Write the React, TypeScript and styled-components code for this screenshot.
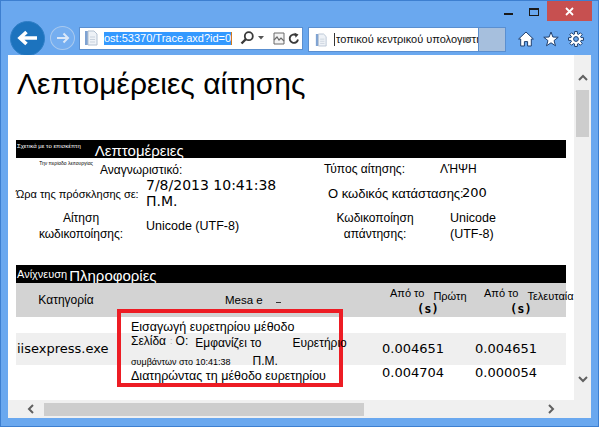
import React from 'react';
import styled, { createGlobalStyle } from 'styled-components';

const GlobalStyle = createGlobalStyle`
  html, body { margin: 0; padding: 0; background: #fff; }
  body {
    font-family: "Liberation Sans", Arial, sans-serif;
    overflow: hidden;
  }
`;

const Frame = styled.div`
  width: 599px;
  height: 427px;
  box-sizing: border-box;
  border: 1px solid #3d7fd0;
  background: #6aa8ef;
  display: flex;
  flex-direction: column;
`;

/* ---------- title bar ---------- */

const TitleBar = styled.div`
  height: 20px;
  flex: none;
  display: flex;
  justify-content: flex-end;
  padding-right: 6px;
`;

const CtrlSlot = styled.div<{ $pt: number }>`
  width: 26px;
  display: flex;
  justify-content: center;
  align-items: flex-start;
  padding-top: ${({ $pt }) => $pt}px;
  box-sizing: border-box;
`;

const MinGlyph = styled.div`
  width: 9px;
  height: 2px;
  background: #1a1a1a;
`;

const MaxGlyph = styled.div`
  width: 10px;
  height: 8px;
  box-sizing: border-box;
  border: 1px solid #1a1a1a;
  border-top-width: 2px;
`;

const CloseBtn = styled.div`
  width: 45px;
  background: #c75050;
  display: flex;
  align-items: center;
  justify-content: center;
`;

/* ---------- navigation toolbar ---------- */

const Toolbar = styled.div`
  height: 34px;
  flex: none;
  display: flex;
  align-items: center;
  padding-left: 9px;
`;

const BackButton = styled.div`
  width: 35px;
  height: 35px;
  flex: none;
  box-sizing: border-box;
  border-radius: 50%;
  background: #1c73be;
  border: 1px solid #2f7fc7;
  display: flex;
  align-items: center;
  justify-content: center;
`;

const ForwardButton = styled.div`
  width: 25px;
  height: 24px;
  flex: none;
  margin-left: 5px;
  box-sizing: border-box;
  border-radius: 50%;
  border: 1.5px solid #a9c9ee;
  background: #75aef0;
  display: flex;
  align-items: center;
  justify-content: center;
`;

const AddressBar = styled.div`
  width: 224px;
  height: 23px;
  flex: none;
  margin-left: 4px;
  box-sizing: border-box;
  background: #fff;
  border: 1px solid #5a8fd0;
  display: flex;
  align-items: center;
  padding-left: 4px;
`;

const UrlSelection = styled.div`
  width: 128px;
  height: 13px;
  margin-left: 6px;
  flex: none;
  overflow: hidden;
  background: #3399ff;
  color: #fff;
  font-size: 11px;
  line-height: 13px;
  white-space: nowrap;
  border-right: 1px solid #d07a1e;
  box-sizing: border-box;
`;

const BarIcon = styled.span<{ $ml: number }>`
  display: flex;
  flex: none;
  margin-left: ${({ $ml }) => $ml}px;
`;

const Tab = styled.div`
  position: relative;
  width: 171px;
  height: 25px;
  flex: none;
  align-self: flex-end;
  margin: 0 0 3px 5px;
  box-sizing: border-box;
  background: #fff;
  border: 1px solid #5a8fd0;
  display: flex;
  align-items: center;
  padding-left: 6px;
`;

const TabTitle = styled.span`
  margin-left: 7px;
  padding-left: 1px;
  border-left: 1px solid #333;
  font-size: 11px;
  line-height: 13px;
  color: #111;
  white-space: nowrap;
  overflow: hidden;
  flex: 1;
`;

const TabClose = styled.span`
  position: absolute;
  right: 7px;
  top: 5px;
  font-size: 13px;
  line-height: 13px;
  color: #7a7a7a;
`;

const NewTab = styled.div`
  width: 27px;
  height: 25px;
  flex: none;
  align-self: flex-end;
  margin-bottom: 3px;
  box-sizing: border-box;
  background: #a6bfdd;
  border: 1px solid #5a8fd0;
  border-left: none;
`;

const ToolIcons = styled.div`
  display: flex;
  gap: 9px;
  margin-left: 12px;
  margin-top: 1px;
`;

/* ---------- viewport ---------- */

const Viewport = styled.div`
  flex: 1;
  margin: 0 7px 8px 7px;
  display: grid;
  grid-template-columns: 1fr 17px;
  grid-template-rows: 1fr 18px;
  background: #fff;
  overflow: hidden;
`;

const Page = styled.div`
  position: relative;
  overflow: hidden;
  padding: 0 0 0 8px;
  color: #000;
`;

const PageTitle = styled.h1`
  margin: 11px 0 0 0;
  padding-left: 1px;
  font-size: 30px;
  line-height: 36px;
  font-weight: normal;
  white-space: nowrap;
`;

const SectionBar = styled.div<{ $mt: number }>`
  width: 550px;
  height: 18px;
  margin-top: ${({ $mt }) => $mt}px;
  background: #000;
  color: #fff;
  display: flex;
  align-items: flex-end;
  white-space: nowrap;
`;

const BarSmall = styled.span<{ $size: number; $mt: number }>`
  align-self: flex-start;
  margin-top: ${({ $mt }) => $mt}px;
  padding-left: 1px;
  font-size: ${({ $size }) => $size}px;
  line-height: ${({ $size }) => $size + 1}px;
`;

const BarLarge = styled.span<{ $ml: number }>`
  margin-left: ${({ $ml }) => $ml}px;
  font-size: 15px;
  line-height: 14px;
`;

const DetailRow = styled.div<{ $h: number; $top?: boolean }>`
  height: ${({ $h }) => $h}px;
  display: flex;
  align-items: ${({ $top }) => ($top ? 'flex-start' : 'center')};
`;

const Cell = styled.div<{
  $w?: number;
  $align?: 'left' | 'center' | 'right';
  $mt?: number;
  $ml?: number;
  $mb?: number;
  $mono?: boolean;
  $size?: number;
}>`
  flex: none;
  width: ${({ $w }) => ($w ? `${$w}px` : 'auto')};
  margin: ${({ $mt = 0 }) => $mt}px 0 ${({ $mb = 0 }) => $mb}px ${({ $ml = 0 }) => $ml}px;
  text-align: ${({ $align = 'left' }) => $align};
  font-family: ${({ $mono }) =>
    $mono ? '"DejaVu Sans", Verdana, sans-serif' : '"Liberation Sans", Arial, sans-serif'};
  font-size: ${({ $size = 12 }) => $size}px;
  line-height: 16px;
  white-space: nowrap;
`;

const TinyNote = styled.div`
  width: 84px;
  flex: none;
  margin-top: 2px;
  padding-right: 7px;
  box-sizing: border-box;
  text-align: right;
  font-size: 5px;
  line-height: 6px;
  white-space: nowrap;
`;

/* ---------- trace table ---------- */

const TraceWrap = styled.div`
  position: relative;
  width: 550px;
`;

const TraceGrid = styled.div<{ $h: number; $bg: string; $top?: boolean }>`
  display: grid;
  grid-template-columns: 100px 252px 107px 91px;
  height: ${({ $h }) => $h}px;
  background: ${({ $bg }) => $bg};
  align-items: ${({ $top }) => ($top ? 'start' : 'center')};
`;

const HeadCell = styled.div<{ $pl?: number; $center?: boolean; $size: number }>`
  display: flex;
  justify-content: ${({ $center }) => ($center ? 'center' : 'flex-start')};
  padding-left: ${({ $pl = 0 }) => $pl}px;
  font-size: ${({ $size }) => $size}px;
  line-height: 16px;
  white-space: nowrap;
`;

const HeadStack = styled.div<{ $pl: number }>`
  align-self: start;
  padding: 3px 0 0 ${({ $pl }) => $pl}px;
  display: flex;
  flex-direction: column;
  white-space: nowrap;
`;

const HeadLine = styled.div`
  display: flex;
  align-items: flex-start;
  font-size: 11px;
  line-height: 14px;
`;

const HeadWord = styled.span`
  margin: 3px 0 0 9px;
  font-size: 11px;
`;

const HeadUnit = styled.span<{ $ml: number }>`
  margin: -1px 0 0 ${({ $ml }) => $ml}px;
  font-family: "DejaVu Sans Mono", "Liberation Mono", monospace;
  font-weight: bold;
  font-size: 12px;
  line-height: 14px;
`;

const DashMark = styled.span`
  width: 5px;
  height: 1px;
  margin: 10px 0 0 13px;
  background: #333;
`;

const DataCell = styled.div<{ $pl?: number }>`
  padding-left: ${({ $pl = 0 }) => $pl}px;
  font-family: "DejaVu Sans", Verdana, sans-serif;
  font-size: 13px;
  line-height: 16px;
  white-space: nowrap;
`;

const RedBox = styled.div`
  position: absolute;
  left: 101px;
  top: 26px;
  width: 226px;
  height: 78px;
  box-sizing: border-box;
  border: 4px solid #ed1c24;
  padding: 6px 0 0 10px;
  white-space: nowrap;
`;

const BoxLine = styled.div<{ $h: number }>`
  height: ${({ $h }) => $h}px;
  display: flex;
  align-items: flex-end;
  font-size: 12.5px;
  line-height: 16px;
`;

const BoxText = styled.span<{ $size: number; $ml?: number; $mb?: number; $muted?: boolean }>`
  font-size: ${({ $size }) => $size}px;
  line-height: ${({ $size }) => ($size < 10 ? 12 : 14)}px;
  margin: 0 0 ${({ $mb = 0 }) => $mb}px ${({ $ml = 0 }) => $ml}px;
  color: ${({ $muted }) => ($muted ? '#b0b0b0' : '#000')};
`;

/* ---------- scrollbars ---------- */

const VScroll = styled.div`
  background: #f0f0f0;
  display: flex;
  flex-direction: column;
  align-items: center;
  padding: 18px 0 16px;
  box-sizing: border-box;
`;

const VThumb = styled.div`
  width: 13px;
  height: 47px;
  margin-top: 7px;
  background: #cdcdcd;
`;

const HScroll = styled.div`
  background: #f0f0f0;
  display: flex;
  align-items: center;
  padding: 0 18px;
`;

const HThumb = styled.div`
  width: 320px;
  height: 13px;
  margin-left: 8px;
  background: #cdcdcd;
`;

const Corner = styled.div`
  background: #f0f0f0;
`;

const Spacer = styled.div`
  flex: 1;
`;

/* ---------- drawings ---------- */

const NAVY = '#1e3f6e';

const Chevron = ({ dir }: { dir: 'up' | 'down' | 'left' | 'right' }) => {
  const rot = { up: 0, right: 90, down: 180, left: 270 }[dir];
  return (
    <svg width="10" height="10" viewBox="0 0 10 10" style={{ transform: `rotate(${rot}deg)` }}>
      <polyline points="1,7 5,3 9,7" fill="none" stroke="#606060" strokeWidth="2" />
    </svg>
  );
};

const PageIcon = ({ w, h }: { w: number; h: number }) => (
  <svg width={w} height={h} viewBox="0 0 14 16">
    <rect x="1" y="1" width="3" height="14" fill="#7fa3d3" />
    <path d="M4 1 H10 L13 4 V15 H4 Z" fill="#eef2f7" stroke="#b4c1d1" />
    <path d="M6 7 H11 M6 9.5 H11 M6 12 H11" stroke="#c9d2dd" />
  </svg>
);

const starPoints = () => {
  const pts: string[] = [];
  for (let i = 0; i < 10; i++) {
    const r = i % 2 === 0 ? 7.6 : 3.2;
    const a = (Math.PI / 5) * i - Math.PI / 2;
    pts.push(`${(8 + r * Math.cos(a)).toFixed(2)},${(8.6 + r * Math.sin(a)).toFixed(2)}`);
  }
  return pts.join(' ');
};

const gearPoints = () => {
  const pts: string[] = [];
  for (let k = 0; k < 8; k++) {
    const a = (Math.PI / 4) * k;
    const d = (deg: number) => (deg * Math.PI) / 180;
    [
      [-16, 5.2],
      [-10, 7.6],
      [10, 7.6],
      [16, 5.2],
    ].forEach(([off, r]) => {
      const t = a + d(off);
      pts.push(`${(8 + r * Math.cos(t)).toFixed(2)},${(8 + r * Math.sin(t)).toFixed(2)}`);
    });
  }
  return pts.join(' ');
};

export default function App() {
  return (
    <>
      <GlobalStyle />
      <Frame>
        <TitleBar>
          <CtrlSlot $pt={12}>
            <MinGlyph />
          </CtrlSlot>
          <CtrlSlot $pt={7}>
            <MaxGlyph />
          </CtrlSlot>
          <CloseBtn>
            <svg width="9" height="9" viewBox="0 0 9 9">
              <path d="M1 1 L8 8 M8 1 L1 8" stroke="#fff" strokeWidth="1.8" />
            </svg>
          </CloseBtn>
        </TitleBar>

        <Toolbar>
          <BackButton>
            <svg width="22" height="16" viewBox="0 0 22 16">
              <path d="M20 8 H3.5 M9.5 2 L3 8 L9.5 14" fill="none" stroke="#fff" strokeWidth="3.6" />
            </svg>
          </BackButton>
          <ForwardButton>
            <svg width="14" height="12" viewBox="0 0 14 12">
              <path d="M1 6 H12 M7.5 1.5 L12 6 L7.5 10.5" fill="none" stroke="#dbe8f8" strokeWidth="2" />
            </svg>
          </ForwardButton>
          <AddressBar>
            <PageIcon w={14} h={16} />
            <UrlSelection>ost:53370/Trace.axd?id=0</UrlSelection>
            <BarIcon $ml={8}>
              <svg width="14" height="14" viewBox="0 0 14 14">
                <circle cx="8.8" cy="5.2" r="4" fill="none" stroke="#3a3a3a" strokeWidth="1.8" />
                <path d="M6 8 L1.5 12.5" stroke="#3a3a3a" strokeWidth="2.4" />
              </svg>
            </BarIcon>
            <BarIcon $ml={4}>
              <svg width="6" height="4" viewBox="0 0 6 4">
                <path d="M0 0 H6 L3 3.5 Z" fill="#555" />
              </svg>
            </BarIcon>
            <BarIcon $ml={9}>
              <svg width="12" height="13" viewBox="0 0 12 13">
                <path d="M1 1 H11 V12 H1 Z" fill="#f4f4f4" stroke="#6a6a6a" />
                <path d="M1 8 L4 5 L6 8 L8 6 L11 9" fill="none" stroke="#6a6a6a" strokeWidth="1.2" />
              </svg>
            </BarIcon>
            <BarIcon $ml={3}>
              <svg width="12" height="13" viewBox="0 0 12 13">
                <path d="M10 7.5 A4.2 4.2 0 1 1 8.3 3.2" fill="none" stroke="#3a3a3a" strokeWidth="1.9" />
                <path d="M6.5 0.8 L10.5 2.6 L7.6 5.8 Z" fill="#3a3a3a" />
              </svg>
            </BarIcon>
          </AddressBar>
          <Tab>
            <PageIcon w={12} h={14} />
            <TabTitle>τοπικού κεντρικού υπολογιστή</TabTitle>
            <TabClose>×</TabClose>
          </Tab>
          <NewTab />
          <ToolIcons>
            <svg width="16" height="16" viewBox="0 0 16 16">
              <path
                d="M8 1 L15.4 8 H13.3 V15 H9.6 V10.6 H6.4 V15 H2.7 V8 H0.6 Z"
                fill="#fff"
                stroke={NAVY}
                strokeWidth="1"
                strokeLinejoin="round"
              />
            </svg>
            <svg width="16" height="16" viewBox="0 0 16 16">
              <polygon points={starPoints()} fill="#fff" stroke={NAVY} strokeWidth="1" strokeLinejoin="round" />
            </svg>
            <svg width="16" height="16" viewBox="0 0 16 16">
              <polygon points={gearPoints()} fill="#fff" stroke={NAVY} strokeWidth="1" strokeLinejoin="round" />
              <circle cx="8" cy="8" r="2.4" fill="#6aa8ef" stroke={NAVY} strokeWidth="1" />
            </svg>
          </ToolIcons>
        </Toolbar>

        <Viewport>
          <Page>
            <PageTitle>Λεπτομέρειες αίτησης</PageTitle>

            <SectionBar $mt={38}>
              <BarSmall $size={6} $mt={3}>
                Σχετικά με το επισκέπτη
              </BarSmall>
              <BarLarge $ml={14}>Λεπτομέρειες</BarLarge>
            </SectionBar>

            <DetailRow $h={18} $top>
              <TinyNote>Την περίοδο λειτουργίας</TinyNote>
              <Cell $w={224} $mt={4}>
                Αναγνωριστικό:
              </Cell>
              <Cell $w={116} $mt={3}>
                Τύπος αίτησης:
              </Cell>
              <Cell $mt={3}>ΛΉΨΗ</Cell>
            </DetailRow>

            <DetailRow $h={34}>
              <Cell $w={130} $size={11} $mt={2}>
                Ώρα της πρόσκλησης σε:
              </Cell>
              <Cell $w={182} $mono $size={14}>
                7/8/2013 10:41:38
                <br />
                Π.Μ.
              </Cell>
              <Cell $w={134} $size={13} $mt={2}>
                Ο κωδικός κατάστασης:
              </Cell>
              <Cell $mono $size={13}>
                200
              </Cell>
            </DetailRow>

            <DetailRow $h={32}>
              <Cell $w={130} $align="center">
                Αίτηση
                <br />
                κωδικοποίησης:
              </Cell>
              <Cell $w={180} $size={12.5}>
                Unicode (UTF-8)
              </Cell>
              <Cell $w={98} $align="center">
                Κωδικοποίηση
                <br />
                απάντησης:
              </Cell>
              <Cell $ml={26} $size={12.5}>
                Unicode
                <br />
                (UTF-8)
              </Cell>
            </DetailRow>

            <SectionBar $mt={23}>
              <BarSmall $size={11} $mt={3}>
                Ανίχνευση
              </BarSmall>
              <BarLarge $ml={2}>Πληροφορίες</BarLarge>
            </SectionBar>

            <TraceWrap>
              <TraceGrid $h={34} $bg="#d3d3d3">
                <HeadCell $center $size={12}>
                  Κατηγορία
                </HeadCell>
                <HeadCell $pl={109} $size={11.5}>
                  Mesa e<DashMark />
                </HeadCell>
                <HeadStack $pl={22}>
                  <HeadLine>
                    Από το<HeadWord>Πρώτη</HeadWord>
                  </HeadLine>
                  <HeadUnit $ml={27}>(s)</HeadUnit>
                </HeadStack>
                <HeadStack $pl={9}>
                  <HeadLine>
                    Από το<HeadWord>Τελευταία</HeadWord>
                  </HeadLine>
                  <HeadUnit $ml={26}>(s)</HeadUnit>
                </HeadStack>
              </TraceGrid>

              <TraceGrid $h={16} $bg="#fff" />

              <TraceGrid $h={32} $bg="#efefef">
                <DataCell $pl={1}>iisexpress.exe</DataCell>
                <DataCell />
                <DataCell $pl={14}>0.004651</DataCell>
                <DataCell>0.004651</DataCell>
              </TraceGrid>

              <TraceGrid $h={30} $bg="#fff" $top>
                <DataCell />
                <DataCell />
                <DataCell $pl={14}>0.004704</DataCell>
                <DataCell>0.000054</DataCell>
              </TraceGrid>

              <RedBox>
                <BoxLine $h={16}>Εισαγωγή ευρετηρίου μέθοδο</BoxLine>
                <BoxLine $h={15}>
                  <BoxText $size={12} $mb={2}>
                    Σελίδα
                  </BoxText>
                  <BoxText $size={9} $ml={4} $mb={3} $muted>
                    :
                  </BoxText>
                  <BoxText $size={12} $ml={3} $mb={2}>
                    Ο:
                  </BoxText>
                  <BoxText $size={12} $ml={7}>
                    Εμφανίζει το
                  </BoxText>
                  <BoxText $size={12} $ml={31}>
                    Ευρετήριο
                  </BoxText>
                </BoxLine>
                <BoxLine $h={18}>
                  <BoxText $size={9}>συμβάντων στο 10:41:38</BoxText>
                  <BoxText $size={12} $ml={22}>
                    Π.Μ.
                  </BoxText>
                </BoxLine>
                <BoxLine $h={16}>Διατηρώντας τη μέθοδο ευρετηρίου</BoxLine>
              </RedBox>
            </TraceWrap>
          </Page>

          <VScroll>
            <Chevron dir="up" />
            <VThumb />
            <Spacer />
            <Chevron dir="down" />
          </VScroll>

          <HScroll>
            <Chevron dir="left" />
            <HThumb />
            <Spacer />
            <Chevron dir="right" />
          </HScroll>
          <Corner />
        </Viewport>
      </Frame>
    </>
  );
}
